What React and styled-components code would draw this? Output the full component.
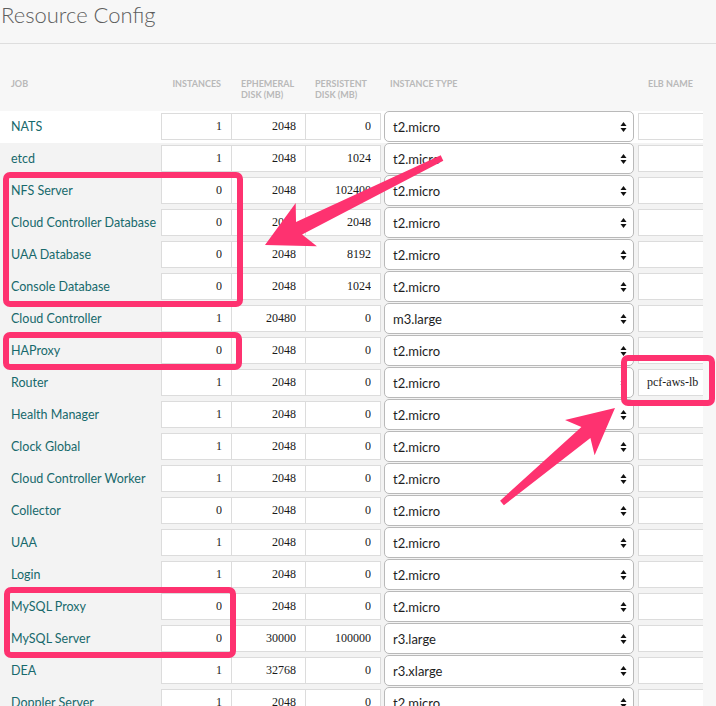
import React from "react";
import styled, { createGlobalStyle } from "styled-components";

const Global = createGlobalStyle`
  html, body { margin: 0; padding: 0; background: #f7f7f7; }
  * { box-sizing: border-box; }
`;

const Page = styled.div`
  position: relative;
  width: 716px;
  height: 706px;
  overflow: hidden;
  background: #f7f7f7;
  font-family: Lato, "Open Sans", sans-serif;
`;

const Title = styled.h2`
  margin: 0;
  height: 43px;
  padding: 0 0 0 1px;
  font-family: Lato, "Open Sans", sans-serif;
  font-weight: 300;
  font-size: 22px;
  line-height: 30px;
  color: #5d5d5d;
  border-bottom: 1px solid #dedede;
  box-sizing: content-box;
`;

const Table = styled.div`
  width: 703px;
  overflow: hidden;
`;

const cols = "161px 70px 74px 76px 257px 1fr";

const HeaderRow = styled.div`
  display: grid;
  grid-template-columns: ${cols};
  height: 67px;
  padding-top: 34px;
  align-items: start;
`;

const HeadLabel = styled.div`
  font-family: Lato, "Open Sans", sans-serif;
  font-weight: 700;
  font-size: 9px;
  line-height: 11px;
  color: #b9b9b9;
  text-transform: uppercase;
  padding-left: ${(p) => p.$pl || 0}px;
  padding-right: ${(p) => p.$pr || 0}px;
  text-align: ${(p) => (p.$right ? "right" : "left")};
`;

const Row = styled.div`
  display: grid;
  grid-template-columns: ${cols};
  height: 32px;
  background: ${(p) => (p.$white ? "#ffffff" : "#f3f3f3")};
`;

const JobCell = styled.div`
  display: flex;
  align-items: center;
  padding-left: 11px;
  padding-bottom: 1px;
  font-size: 12.5px;
  color: #17696c;
  white-space: nowrap;
`;

const InputCell = styled.div`
  padding-top: 2px;
`;

const NumInput = styled.input`
  display: block;
  width: 100%;
  height: 27px;
  margin: 0;
  border: 1px solid #dcdcdc;
  border-right: ${(p) => (p.$last ? "1px solid #dcdcdc" : "none")};
  border-radius: 0;
  background: #fff;
  font-family: "Liberation Serif", "Times New Roman", serif;
  font-size: 12px;
  color: #1a1a1a;
  text-align: right;
  padding: 0 9px 0 0;
  outline: none;
`;

const SelectCell = styled.div`
  padding: 0 4px 1px 3px;
`;

const Select = styled.div`
  height: 31px;
  display: flex;
  align-items: center;
  justify-content: space-between;
  border: 1px solid #b9b9b9;
  border-radius: 5px;
  background: #fff;
  padding: 0 6px 0 8px;
  font-family: Lato, "Open Sans", sans-serif;
  font-size: 13px;
  color: #1e1e1e;
`;

const ElbInput = styled.input`
  display: block;
  width: 90px;
  height: 27px;
  margin: 0;
  border: 1px solid #dcdcdc;
  border-radius: 0;
  background: #fff;
  font-family: "Liberation Serif", "Times New Roman", serif;
  font-size: 12px;
  color: #1a1a1a;
  padding: 0 0 0 8px;
  outline: none;
`;

const Overlay = styled.svg`
  position: absolute;
  left: 0;
  top: 0;
  pointer-events: none;
`;

const Arrows = () => (
  <svg width="7" height="12" viewBox="0 0 7 12">
    <path d="M3.5 1 L6.5 5 L0.5 5 Z" fill="#111" />
    <path d="M3.5 11 L6.5 7 L0.5 7 Z" fill="#111" />
  </svg>
);

const rows = [
  ["NATS", 1, 2048, 0, "t2.micro"],
  ["etcd", 1, 2048, 1024, "t2.micro"],
  ["NFS Server", 0, 2048, 102400, "t2.micro"],
  ["Cloud Controller Database", 0, 2048, 2048, "t2.micro"],
  ["UAA Database", 0, 2048, 8192, "t2.micro"],
  ["Console Database", 0, 2048, 1024, "t2.micro"],
  ["Cloud Controller", 1, 20480, 0, "m3.large"],
  ["HAProxy", 0, 2048, 0, "t2.micro"],
  ["Router", 1, 2048, 0, "t2.micro", "pcf-aws-lb"],
  ["Health Manager", 1, 2048, 0, "t2.micro"],
  ["Clock Global", 1, 2048, 0, "t2.micro"],
  ["Cloud Controller Worker", 1, 2048, 0, "t2.micro"],
  ["Collector", 0, 2048, 0, "t2.micro"],
  ["UAA", 1, 2048, 0, "t2.micro"],
  ["Login", 1, 2048, 0, "t2.micro"],
  ["MySQL Proxy", 0, 2048, 0, "t2.micro"],
  ["MySQL Server", 0, 30000, 100000, "r3.large"],
  ["DEA", 1, 32768, 0, "r3.xlarge"],
  ["Doppler Server", 1, 2048, 0, "t2.micro"],
];

const PINK = "#fe3270";

export default function App() {
  return (
    <>
      <Global />
      <Page>
        <Title>Resource Config</Title>
        <Table>
          <HeaderRow>
            <HeadLabel $pl={11}>Job</HeadLabel>
            <HeadLabel $right $pr={10}>Instances</HeadLabel>
            <HeadLabel $pl={10}>Ephemeral<br />Disk (MB)</HeadLabel>
            <HeadLabel $pl={10}>Persistent<br />Disk (MB)</HeadLabel>
            <HeadLabel $pl={9}>Instance Type</HeadLabel>
            <HeadLabel $pl={10}>ELB Name</HeadLabel>
          </HeaderRow>
          {rows.map(([job, inst, eph, pers, type, elb], i) => (
            <Row key={job} $white={i === 0}>
              <JobCell>{job}</JobCell>
              <InputCell><NumInput readOnly value={inst} /></InputCell>
              <InputCell><NumInput readOnly value={eph} /></InputCell>
              <InputCell><NumInput readOnly $last value={pers} /></InputCell>
              <SelectCell>
                <Select>
                  <span>{type}</span>
                  <Arrows />
                </Select>
              </SelectCell>
              <InputCell><ElbInput readOnly value={elb || ""} /></InputCell>
            </Row>
          ))}
        </Table>
        <Overlay width="716" height="706" viewBox="0 0 716 706">
          <g fill="none" stroke={PINK} strokeWidth="6">
            <rect x="6" y="175" width="234" height="129" rx="4" />
            <rect x="6" y="335" width="233" height="32" rx="4" />
            <rect x="7" y="590" width="226" height="65" rx="4" />
            <rect x="624" y="358" width="88" height="45" rx="4" />
          </g>
          <g fill={PINK}>
            <polygon points="265,245 316.9,246.3 302.1,234.5 443.3,160.7 440.7,155.3 296,221.9 295.7,203.1" />
            <polygon points="615,408 594.6,455.2 590.4,437.9 503.9,505.3 500.1,500.7 581.4,427.1 565,420" />
          </g>
        </Overlay>
      </Page>
    </>
  );
}
